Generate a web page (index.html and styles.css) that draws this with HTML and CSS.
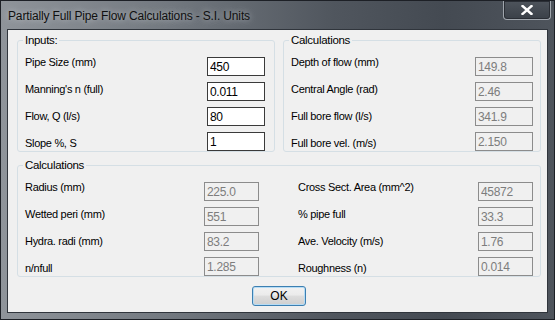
FILE: index.html
```html
<!DOCTYPE html>
<html lang="en">
<head>
  <meta charset="UTF-8">
  <title>Partially Full Pipe Flow Calculations - S.I. Units</title>
  <link rel="stylesheet" href="styles.css">
</head>
<body>
  <div class="window">
    <div class="titlebar">
      <span class="title">Partially Full Pipe Flow Calculations - S.I. Units</span>
      <div class="close">
        <svg viewBox="0 0 12 10" width="12" height="10">
          <path d="M1.5 1 L10.5 9 M10.5 1 L1.5 9" stroke="#fff" stroke-width="2.4" stroke-linecap="square"/>
        </svg>
      </div>
    </div>

    <div class="client">
      <div class="top-row">
        <fieldset class="group inputs">
          <legend>Inputs:</legend>
          <div class="pair">
            <div class="labels">
              <label for="pipeSize">Pipe Size (mm)</label>
              <label for="manning">Manning's n (full)</label>
              <label for="flow">Flow, Q (l/s)</label>
              <label for="slope">Slope %, S</label>
            </div>
            <div class="boxes">
              <input id="pipeSize" value="450">
              <input id="manning" value="0.011">
              <input id="flow" value="80">
              <input id="slope" value="1">
            </div>
          </div>
        </fieldset>

        <fieldset class="group">
          <legend>Calculations</legend>
          <div class="pair">
            <div class="labels">
              <label>Depth of flow (mm)</label>
              <label>Central Angle (rad)</label>
              <label>Full bore flow (l/s)</label>
              <label>Full bore vel. (m/s)</label>
            </div>
            <div class="boxes">
              <input class="calc" value="149.8" readonly>
              <input class="calc" value="2.46" readonly>
              <input class="calc" value="341.9" readonly>
              <input class="calc" value="2.150" readonly>
            </div>
          </div>
        </fieldset>
      </div>

      <fieldset class="group wide">
        <legend>Calculations</legend>
        <div class="halves">
          <div class="pair">
            <div class="labels">
              <label>Radius (mm)</label>
              <label>Wetted peri (mm)</label>
              <label>Hydra. radi (mm)</label>
              <label>n/nfull</label>
            </div>
            <div class="boxes small">
              <input class="calc" value="225.0" readonly>
              <input class="calc" value="551" readonly>
              <input class="calc" value="83.2" readonly>
              <input class="calc" value="1.285" readonly>
            </div>
          </div>
          <div class="pair">
            <div class="labels">
              <label>Cross Sect. Area (mm^2)</label>
              <label>% pipe full</label>
              <label>Ave. Velocity (m/s)</label>
              <label>Roughness (n)</label>
            </div>
            <div class="boxes small">
              <input class="calc" value="45872" readonly>
              <input class="calc" value="33.3" readonly>
              <input class="calc" value="1.76" readonly>
              <input class="calc" value="0.014" readonly>
            </div>
          </div>
        </div>
      </fieldset>

      <div class="btn-wrap">
        <button type="button" class="ok">OK</button>
      </div>
    </div>
  </div>
</body>
</html>
```

FILE: styles.css
```css
body {
  margin: 0;
  width: 555px;
  height: 320px;
  overflow: hidden;
  font-family: "Liberation Sans", Arial, sans-serif;
  background-color: #2c3038;
}
.window {
  width: 555px;
  height: 320px;
  box-sizing: border-box;
  border: 1px solid #1d2026;
  padding: 0 6px 6px 6px;
  display: flex;
  flex-direction: column;
  background: linear-gradient(to right, #8f949a 0%, #737980 30%, #50565e 60%, #444a52 80%, #4e545c 100%);
}
.titlebar {
  height: 28px;
  display: flex;
  justify-content: space-between;
  align-items: flex-start;
}
.title {
  font-size: 12px;
  letter-spacing: -0.15px;
  color: #101010;
  padding: 8px 0 0 1px;
  text-shadow: 0 0 6px rgba(220, 225, 230, 0.8);
}
.close {
  width: 46px;
  height: 18px;
  margin-right: -3px;
  border: 1px solid #a0a6ad;
  border-top: none;
  border-radius: 0 0 4px 4px;
  background: linear-gradient(#4e545c, #3a4048);
  box-shadow: inset 0 0 0 1px #2a2e35;
  display: flex;
  align-items: center;
  justify-content: center;
}
.client {
  flex: 1;
  background-color: #f0f0f0;
  border: 1px solid #30353c;
  padding: 4px 6px 0 9px;
  font-size: 11px;
  letter-spacing: -0.3px;
  color: #000;
}
.top-row {
  display: flex;
  gap: 8px;
}
.group {
  margin: 0;
  padding: 10px 7px 0 7px;
  border: 1px solid #d5dfe5;
  border-radius: 3px;
  min-width: 0;
}
.top-row .group {
  width: 258px;
  box-sizing: border-box;
}
.group legend {
  padding: 0 2px;
  margin-left: -2px;
  line-height: 13px;
  font-size: 11.5px;
}
.wide {
  margin-top: 7px;
}
.halves {
  display: grid;
  grid-template-columns: 234px 235px;
  column-gap: 39px;
}
.pair {
  display: flex;
  justify-content: space-between;
}
.labels {
  display: flex;
  flex-direction: column;
  margin-top: -2px;
}
.labels label {
  line-height: 14px;
  margin-bottom: 13px;
  white-space: nowrap;
}
.labels label:last-child {
  margin-bottom: 0;
}
.boxes {
  display: flex;
  flex-direction: column;
  gap: 6px;
}
.inputs .boxes {
  margin-right: 2px;
}
input {
  width: 58px;
  height: 19px;
  box-sizing: border-box;
  margin: 0;
  padding: 0 2px;
  border: 1px solid #3a3a3a;
  background-color: #fff;
  font-family: "Liberation Sans", Arial, sans-serif;
  font-size: 12px;
  letter-spacing: -0.3px;
  color: #000;
  outline: none;
}
.boxes.small input {
  width: 55px;
}
input.calc {
  background-color: #f0f0f0;
  border-color: #8c8c8c;
  color: #7d7d7d;
}
.btn-wrap {
  text-align: center;
  margin-top: 9px;
}
.ok {
  width: 54px;
  height: 20px;
  padding: 0;
  font-family: "Liberation Sans", Arial, sans-serif;
  font-size: 12px;
  color: #000;
  border: 1px solid #3c7fb1;
  border-radius: 3px;
  background: linear-gradient(#f2f2f2 0%, #ebebeb 45%, #dddddd 50%, #cfcfcf 100%);
  box-shadow: inset 0 0 0 1px #b6dcf5;
}
```
